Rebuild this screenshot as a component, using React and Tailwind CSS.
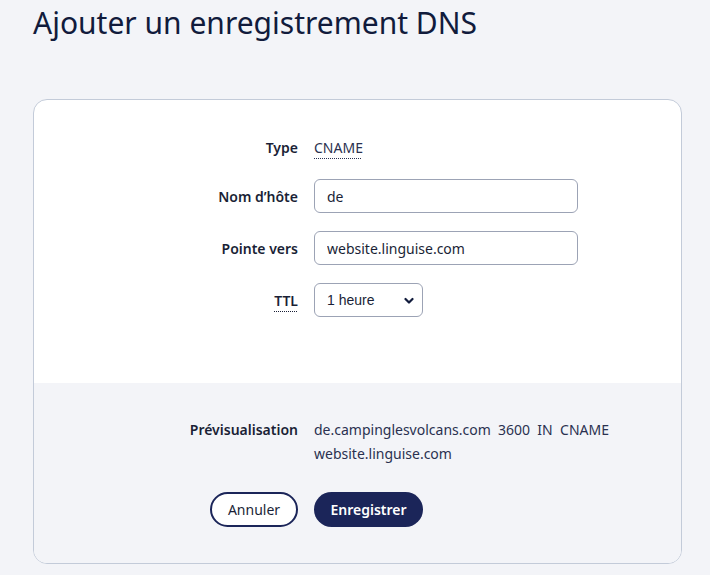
import React from "react";

const Label = ({ children, dotted }) => (
  <span
    className={`text-[14px] font-semibold text-[#1a1f36] ${
      dotted ? "underline decoration-dotted decoration-1 underline-offset-[5px]" : ""
    }`}
  >
    {children}
  </span>
);

export default function App() {
  return (
    <div className="min-h-[575px] bg-[#f3f4f8] px-[33px] pt-[2px] font-['Noto_Sans',sans-serif] text-[#1a1f36]">
      <h1 className="text-[30px] leading-[42px] font-normal text-[#111b3c]">
        Ajouter un enregistrement DNS
      </h1>

      <div className="mt-[55px] w-[649px] overflow-hidden rounded-[14px] border border-[#c3cbd9] bg-white">
        <div className="grid grid-cols-[264px_1fr] gap-x-4 pt-[35px] pb-[66px]">
          <div className="flex items-center justify-end h-[24px]">
            <Label>Type</Label>
          </div>
          <div className="flex items-center h-[24px]">
            <span className="text-[14px] text-[#2a3150] underline decoration-dotted decoration-1 underline-offset-[5px]">
              CNAME
            </span>
          </div>

          <div className="mt-[20px] flex items-center justify-end h-[34px]">
            <Label>Nom d’hôte</Label>
          </div>
          <div className="mt-[20px]">
            <input
              defaultValue="de"
              className="h-[34px] w-[264px] rounded-[6px] border border-[#9ca3b5] bg-white px-3 text-[14px] text-[#1a1f36] outline-none"
            />
          </div>

          <div className="mt-[18px] flex items-center justify-end h-[34px]">
            <Label>Pointe vers</Label>
          </div>
          <div className="mt-[18px]">
            <input
              defaultValue="website.linguise.com"
              className="h-[34px] w-[264px] rounded-[6px] border border-[#9ca3b5] bg-white px-3 text-[14px] text-[#1a1f36] outline-none"
            />
          </div>

          <div className="mt-[18px] flex items-center justify-end h-[34px]">
            <Label dotted>TTL</Label>
          </div>
          <div className="mt-[18px]">
            <div className="relative flex h-[34px] w-[109px] items-center rounded-[6px] border border-[#9ca3b5] bg-white pl-3">
              <span className="font-['Liberation_Sans',sans-serif] text-[14px] text-[#1a1f36]">1 heure</span>
              <svg
                className="absolute right-[8px] top-[13px]"
                width="10"
                height="8"
                viewBox="0 0 10 8"
                fill="none"
              >
                <path d="M1.5 2 L5 5.5 L8.5 2" stroke="#111b3c" strokeWidth="2.2" strokeLinecap="round" strokeLinejoin="round" />
              </svg>
            </div>
          </div>
        </div>

        <div className="bg-[#f3f4f8] pt-[35px] pb-[36px]">
          <div className="grid grid-cols-[264px_1fr] gap-x-4">
            <div className="flex justify-end">
              <span className="text-[14px] leading-[24px] font-semibold text-[#1a1f36]">Prévisualisation</span>
            </div>
            <div className="w-[300px] text-[14px] leading-[24px] text-[#2a3150]">
              <div className="whitespace-pre">de.campinglesvolcans.com  3600  IN  CNAME</div>
              <div>website.linguise.com</div>
            </div>
          </div>
          <div className="mt-[26px] grid grid-cols-[264px_1fr] gap-x-4">
            <div className="flex justify-end">
              <button className="h-[35px] w-[88px] rounded-full border-2 border-[#1b2559] bg-white text-[14px] text-[#1a1f36]">
                Annuler
              </button>
            </div>
            <div>
              <button className="h-[35px] w-[109px] rounded-full bg-[#1b2559] text-[14px] font-semibold text-white">
                Enregistrer
              </button>
            </div>
          </div>
        </div>
      </div>
    </div>
  );
}
